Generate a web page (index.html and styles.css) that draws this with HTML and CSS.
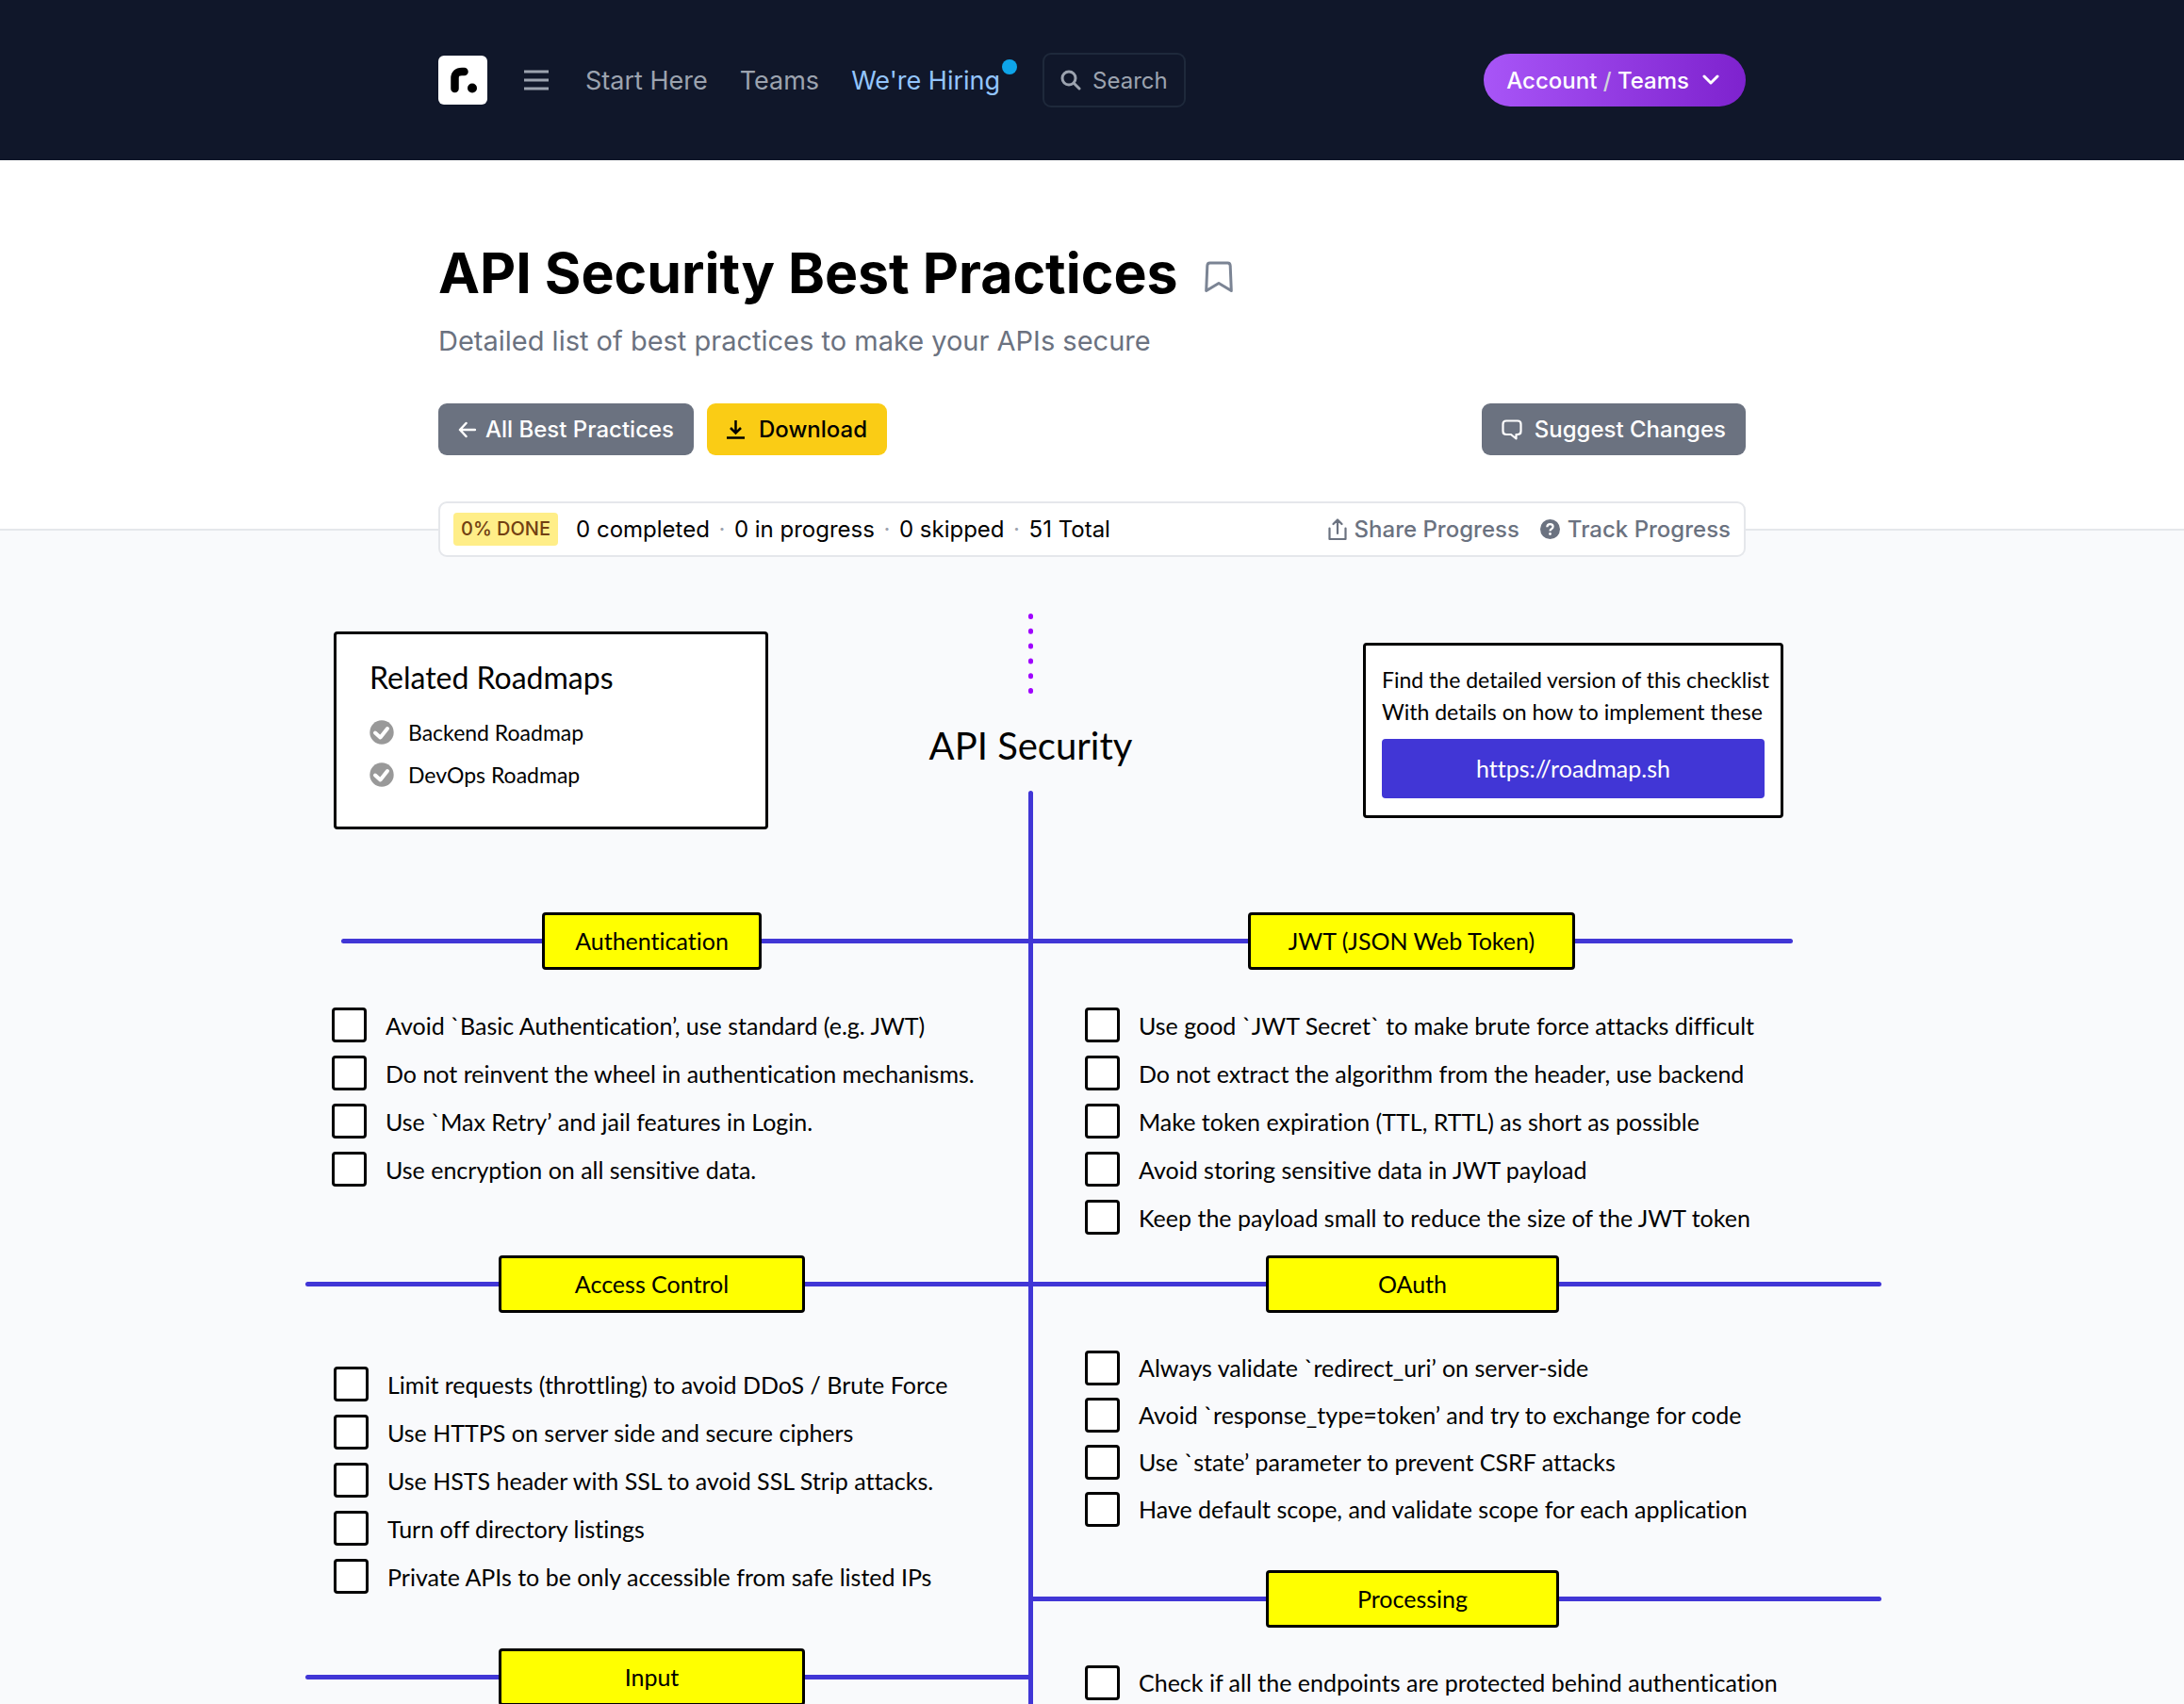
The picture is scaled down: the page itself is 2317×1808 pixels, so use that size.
FILE: index.html
```html
<!DOCTYPE html>
<html lang="en">
<head>
<meta charset="utf-8">
<meta name="viewport" content="width=device-width, initial-scale=1">
<title>API Security Best Practices</title>
<link rel="stylesheet" href="styles.css">
</head>
<body>
<header class="topbar">
  <div class="container topbar-row">
    <nav class="nav" aria-label="Main">
      <a class="logo" href="#" aria-label="Home">
        <svg width="52" height="52" viewBox="0 0 52 52"><rect width="52" height="52" rx="6" fill="#fff"/><path d="M17.500 35V24Q17.500 17 25 17H27.500" fill="none" stroke="#000" stroke-width="8.500" stroke-linecap="round" stroke-linejoin="round"/><circle cx="36" cy="34.500" r="5" fill="#000"/></svg>
      </a>
      <button class="menu" type="button" aria-label="Menu">
        <svg width="26" height="22" viewBox="0 0 26 22" stroke="#9ca3af" stroke-width="3"><path d="M0 2h26M0 11h26M0 20h26"/></svg>
      </button>
      <a class="nav-link" href="#">Start Here</a>
      <a class="nav-link" href="#">Teams</a>
      <a class="nav-link hiring" href="#">We're Hiring<span class="dot"></span></a>
      <button class="search" type="button">
        <svg width="22" height="22" viewBox="0 0 22 22" fill="none" stroke="#9ca3af" stroke-width="3" stroke-linecap="round"><circle cx="9" cy="9" r="7"/><path d="M14.500 14.500L20 20"/></svg>
        Search
      </button>
    </nav>
    <button class="account" type="button"><span>Account <span class="slash">/</span> Teams</span>
      <svg width="18" height="12" viewBox="0 0 18 12" fill="none" stroke="#fff" stroke-width="3" stroke-linecap="round" stroke-linejoin="round"><path d="M2 2l7 7 7-7"/></svg>
    </button>
  </div>
</header>

<section class="hero">
  <div class="container">
    <div class="title-row">
      <h1>API Security Best Practices</h1>
      <button class="bookmark" type="button" aria-label="Bookmark">
        <svg width="30" height="34" viewBox="0 0 30 34" fill="none" stroke="#7b8494" stroke-width="3" stroke-linejoin="round"><path d="M5.500 2H24.500Q27 2 27.200 5L28.300 31.500L15 23.500L1.700 31.500L2.800 5Q3 2 5.500 2Z"/></svg>
      </button>
    </div>
    <p class="subtitle">Detailed list of best practices to make your APIs secure</p>
    <div class="actions">
      <a class="btn gray back" href="#"><svg width="19" height="18" viewBox="0 0 19 18" fill="none" stroke="#fff" stroke-width="2.500" stroke-linecap="round" stroke-linejoin="round"><path d="M18 9H2M8.500 2L2 9l6.500 7"/></svg>All Best Practices</a>
      <button class="btn yellow" type="button"><svg width="19" height="20" viewBox="0 0 19 20" fill="none" stroke="#000" stroke-width="2.500"><path d="M9.500 0V13M4 8l5.500 5.500L15 8M0 18.500H19"/></svg>Download</button>
      <a class="btn gray suggest" href="#"><svg width="22" height="22" viewBox="0 0 22 22" fill="none" stroke="#fff" stroke-width="2.200" stroke-linejoin="round"><path d="M5 1.500H17Q20.500 1.500 20.500 5V12.500Q20.500 16 17 16H15.500V20.500L10 16H5Q1.500 16 1.500 12.500V5Q1.500 1.500 5 1.500Z"/></svg>Suggest Changes</a>
    </div>
    <div class="progress">
      <span class="badge">0% DONE</span>
      <span>0 completed</span><span class="sep">·</span><span>0 in progress</span><span class="sep">·</span><span>0 skipped</span><span class="sep">·</span><span>51 Total</span>
      <button class="link share" type="button"><svg width="20" height="24" viewBox="0 0 20 24" fill="none" stroke="#6b7280" stroke-width="2.200" stroke-linecap="round" stroke-linejoin="round"><path d="M1.500 10.500V22H18.500V10.500M10 16V2M5.500 6L10 1.500 14.500 6"/></svg>Share Progress</button>
      <button class="link" type="button"><svg width="21" height="21" viewBox="0 0 21 21"><circle cx="10.500" cy="10.500" r="10.500" fill="#6b7280"/><path d="M7.300 8.200Q7.500 5.200 10.500 5.200 13.600 5.200 13.600 7.800 13.600 9.400 12 10.200 10.500 11 10.500 12.400" fill="none" stroke="#fff" stroke-width="2.200"/><circle cx="10.500" cy="15.500" r="1.400" fill="#fff"/></svg>Track Progress</button>
    </div>
  </div>
</section>

<main class="diagram">
  <div class="intro">
    <aside class="card related">
      <h2>Related Roadmaps</h2>
      <a href="#"><svg width="26" height="26" viewBox="0 0 26 26"><circle cx="13" cy="13" r="12.700" fill="#999"/><path d="M6 13.500L11.500 18.500 19 9" fill="none" stroke="#fff" stroke-width="4" stroke-linecap="round" stroke-linejoin="round"/></svg>Backend Roadmap</a>
      <a href="#"><svg width="26" height="26" viewBox="0 0 26 26"><circle cx="13" cy="13" r="12.700" fill="#999"/><path d="M6 13.500L11.500 18.500 19 9" fill="none" stroke="#fff" stroke-width="4" stroke-linecap="round" stroke-linejoin="round"/></svg>DevOps Roadmap</a>
    </aside>
    <div class="center">
      <svg width="5" height="85" viewBox="0 0 5 85" stroke="#a000ff" stroke-width="5" stroke-linecap="round" stroke-dasharray="1 14.800"><path d="M2.500 2.500V84"/></svg>
      <h2>API Security</h2>
      <div class="stem"></div>
    </div>
    <aside class="card find">
      <p>Find the detailed version of this checklist<br>With details on how to implement these</p>
      <a href="#">https://roadmap.sh</a>
    </aside>
  </div>
  <div class="tree">
    <div class="column left">
      <section class="topic auth">
        <div class="branch"><i></i><h3>Authentication</h3><i></i></div>
        <ul>
          <li><label><input type="checkbox">Avoid `Basic Authentication’, use standard (e.g. JWT)</label></li>
          <li><label><input type="checkbox">Do not reinvent the wheel in authentication mechanisms.</label></li>
          <li><label><input type="checkbox">Use `Max Retry’ and jail features in Login.</label></li>
          <li><label><input type="checkbox">Use encryption on all sensitive data.</label></li>
        </ul>
      </section>
      <section class="topic access">
        <div class="branch"><i></i><h3>Access Control</h3><i></i></div>
        <ul>
          <li><label><input type="checkbox">Limit requests (throttling) to avoid DDoS / Brute Force</label></li>
          <li><label><input type="checkbox">Use HTTPS on server side and secure ciphers</label></li>
          <li><label><input type="checkbox">Use HSTS header with SSL to avoid SSL Strip attacks.</label></li>
          <li><label><input type="checkbox">Turn off directory listings</label></li>
          <li><label><input type="checkbox">Private APIs to be only accessible from safe listed IPs</label></li>
        </ul>
      </section>
      <section class="topic access">
        <div class="branch"><i></i><h3>Input</h3><i></i></div>
      </section>
    </div>
    <div class="trunk"></div>
    <div class="column right">
      <section class="topic jwt">
        <div class="branch"><i></i><h3>JWT (JSON Web Token)</h3><i></i></div>
        <ul>
          <li><label><input type="checkbox">Use good `JWT Secret` to make brute force attacks difficult</label></li>
          <li><label><input type="checkbox">Do not extract the algorithm from the header, use backend</label></li>
          <li><label><input type="checkbox">Make token expiration (TTL, RTTL) as short as possible</label></li>
          <li><label><input type="checkbox">Avoid storing sensitive data in JWT payload</label></li>
          <li><label><input type="checkbox">Keep the payload small to reduce the size of the JWT token</label></li>
        </ul>
      </section>
      <section class="topic oauth">
        <div class="branch"><i></i><h3>OAuth</h3><i></i></div>
        <ul>
          <li><label><input type="checkbox">Always validate `redirect_uri’ on server-side</label></li>
          <li><label><input type="checkbox">Avoid `response_type=token’ and try to exchange for code</label></li>
          <li><label><input type="checkbox">Use `state’ parameter to prevent CSRF attacks</label></li>
          <li><label><input type="checkbox">Have default scope, and validate scope for each application</label></li>
        </ul>
      </section>
      <section class="topic oauth">
        <div class="branch"><i></i><h3>Processing</h3><i></i></div>
        <ul>
          <li><label><input type="checkbox">Check if all the endpoints are protected behind authentication</label></li>
        </ul>
      </section>
    </div>
  </div>
</main>
</body>
</html>
```
FILE: styles.css
```css
* { box-sizing: border-box; }
body { margin: 0; background: #f9fafc; color: #000; font-family: Inter, sans-serif; font-size: 24px; }
h1, h2, h3, p, ul { margin: 0; padding: 0; font-weight: 400; }
ul { list-style: none; }
a { color: inherit; text-decoration: none; }
button { font: inherit; color: inherit; border: 0; padding: 0; background: none; cursor: pointer; }
svg { display: block; flex: none; }
.container { max-width: 1387px; margin: 0 auto; }

.topbar { background: #10172a; padding: 56px 0; }
.topbar-row { display: flex; align-items: center; justify-content: space-between; }
.nav { display: flex; align-items: center; color: #9ca3af; font-size: 27px; white-space: nowrap; }
.menu { margin: 0 39px; }
.nav-link { margin-right: 34px; position: relative; }
.hiring { color: #93c5fd; margin-right: 45px; }
.dot { position: absolute; top: -6px; right: -18px; width: 16px; height: 16px; border-radius: 50%; background: #0ea5e9; }
.search { display: flex; align-items: center; gap: 12px; height: 58px; padding: 0 17px; border: 2px solid #1e293b; border-radius: 9px; font-size: 24px; }
.account { display: flex; align-items: center; gap: 14px; height: 56px; padding: 0 28px 0 24px; border-radius: 28px; background: linear-gradient(to right, #a855f7, #7e22ce); color: #fff; font-weight: 500; }
.slash { color: #d1d5db; }

.hero { background: #fff; border-bottom: 2px solid #e5e7eb; padding-top: 84px; }
.title-row { display: flex; align-items: center; gap: 28px; }
h1 { font-size: 59px; line-height: 72px; font-weight: 700; }
.bookmark { padding-top: 8px; }
.subtitle { margin-top: 16px; font-size: 29px; line-height: 40px; color: #6b7280; }
.actions { display: flex; gap: 14px; margin-top: 46px; }
.btn { display: flex; align-items: center; gap: 13px; height: 55px; padding: 0 21px; border-radius: 9px; font-weight: 500; }
.gray { background: #6b7280; color: #fff; }
.yellow { background: #facc15; gap: 15px; }
.back { gap: 10px; }
.suggest { margin-left: auto; }
.progress { display: flex; align-items: center; height: 59px; margin-top: 49px; margin-bottom: -30px; padding: 0 14px; background: #fff; border: 2px solid #e5e7eb; border-radius: 9px; position: relative; }
.badge { background: #ffee88; color: #713f12; font-size: 20px; font-weight: 500; line-height: 35px; padding: 0 8px; border-radius: 4px; margin-right: 19px; }
.sep { width: 26px; text-align: center; color: #9ca3af; }
.link { display: flex; align-items: center; gap: 8px; color: #6b7280; font-weight: 500; }
.share { margin-left: auto; margin-right: 22px; }

.diagram { max-width: 1675px; margin: 0 auto; padding: 88px 0 0 3px; font-family: Lato, sans-serif; font-size: 25px; font-variant-ligatures: none; }
.intro { display: grid; grid-template-columns: minmax(0, 661fr) minmax(0, 217fr) minmax(0, 794fr); height: 317px; align-items: start; }
.card { background: #fff; border: 3px solid #000; border-radius: 4px; }
.related { margin: 19px 170px 0 30px; height: 210px; padding: 26px 35px; }
.related h2 { font-size: 32px; line-height: 40px; margin-bottom: 15px; }
.related a { display: flex; align-items: center; gap: 15px; height: 45px; font-size: 23px; }
.center { display: flex; flex-direction: column; align-items: center; height: 100%; white-space: nowrap; }
.center h2 { font-size: 40px; line-height: 48px; margin: 31px 0 24px; }
.stem { width: 5px; flex: 1; background: #4136d6; border-radius: 3px 3px 0 0; }
.find { margin: 31px 104px 0 244px; height: 186px; padding: 19px 17px; white-space: nowrap; }
.find p { font-size: 23px; line-height: 34px; margin-bottom: 12px; }
.find a { display: block; background: #4136d6; color: #fff; line-height: 63px; text-align: center; border-radius: 4px; }

.tree { display: grid; grid-template-columns: 767fr 5px 900fr; }
.trunk { background: #4136d6; }
.branch { display: flex; align-items: center; }
.branch i { height: 5px; background: #4136d6; }
.left i:first-child { border-radius: 3px 0 0 3px; }
.right i:last-child { border-radius: 0 3px 3px 0; }
.branch h3 { height: 61px; line-height: 55px; border: 3px solid #000; border-radius: 4px; background: #ff0; font-size: 25px; text-align: center; white-space: nowrap; }
.auth .branch { padding-left: 38px; }
.auth i:first-child { flex: 213; }
.auth i:last-child { flex: 283; }
.auth h3 { width: 233px; }
.access i:first-child { flex: 205; }
.access i:last-child { flex: 237; }
.access h3 { width: 325px; }
.jwt .branch { padding-right: 94px; }
.jwt i:first-child { flex: 228; }
.jwt i:last-child { flex: 231; }
.jwt h3 { width: 347px; }
.oauth i:first-child { flex: 247; }
.oauth i:last-child { flex: 342; }
.oauth h3 { width: 311px; }
.topic ul { padding: 33px 0 0 28px; }
.right ul { padding-left: 55px; }
.auth { margin-bottom: 66px; }
.access ul { padding: 50px 0 51px 30px; }
.jwt { margin-bottom: 15px; }
.oauth { margin-bottom: 40px; }
.topic label { display: flex; align-items: center; gap: 20px; height: 51px; font-size: 25px; white-space: nowrap; }
.oauth label { height: 50px; }
.topic input { appearance: none; width: 37px; height: 37px; margin: 0; border: 3px solid #000; border-radius: 4px; background: #fff; flex: none; }
```
